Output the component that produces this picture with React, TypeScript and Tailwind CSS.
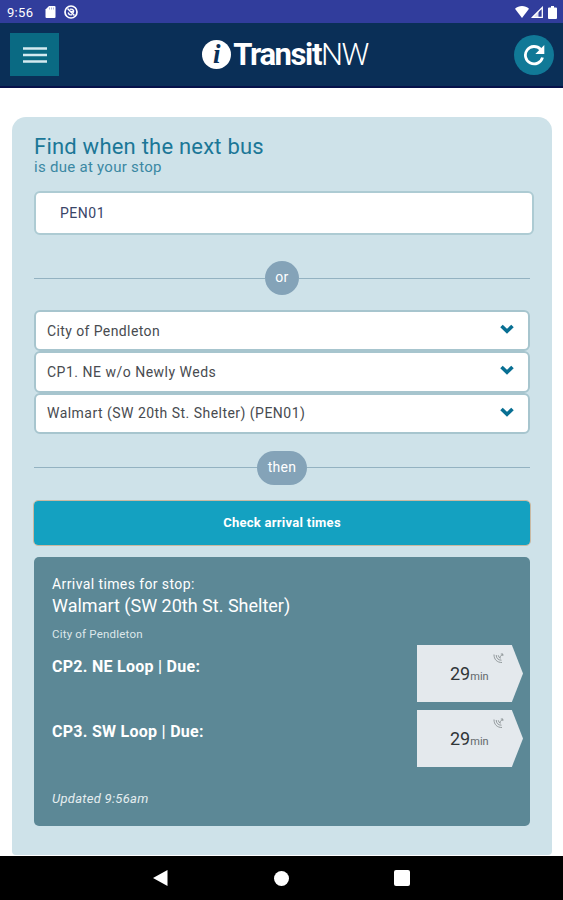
import type { ReactNode } from "react";

type Arrival = {
  route: string;
  minutes: number;
};

const selects = [
  { label: "City of Pendleton", spacing: "tracking-[0.4px]" },
  { label: "CP1. NE w/o Newly Weds", spacing: "tracking-[0.5px]" },
  { label: "Walmart (SW 20th St. Shelter) (PEN01)", spacing: "tracking-[0.47px]" },
];

const arrivals: Arrival[] = [
  { route: "CP2. NE Loop | Due:", minutes: 29 },
  { route: "CP3. SW Loop | Due:", minutes: 29 },
];

function StatusBar() {
  return (
    <div className="flex h-[23px] shrink-0 items-center bg-[#313d9c] pt-px pr-[6px] pl-[7px] text-white">
      <span className="w-[38px] text-[13px] leading-none tracking-[0.3px]">9:56</span>
      <svg className="h-[12px] w-[11px]" viewBox="0 0 10 12" fill="currentColor">
        <path d="M3.5 0H9a1 1 0 0 1 1 1v10a1 1 0 0 1-1 1H1a1 1 0 0 1-1-1V3.5z" />
        <path d="M4 1.5v2M6 1.5v2M8 1.5v2" stroke="#9aa2d4" strokeWidth="0.8" />
      </svg>
      <svg className="ml-[8px] h-[14px] w-[14px]" viewBox="0 0 14 14" fill="none" stroke="currentColor">
        <circle cx="7" cy="7" r="6" strokeWidth="1.7" />
        <path d="M3.5 3.5l7 7" strokeWidth="1.5" />
        <path d="M4.2 7.5a3 3 0 0 0 4 2.2M9.8 6.5a3 3 0 0 0-4-2.2M7 6.5l3 .8" strokeWidth="1.4" />
      </svg>
      <div className="ml-auto flex items-center">
        <svg className="h-[12px] w-[14px]" viewBox="0 0 14 11" preserveAspectRatio="none" fill="currentColor">
          <path d="M0 2.6C2 .8 4.4 0 7 0s5 .8 7 2.6L7 11z" />
        </svg>
        <svg className="ml-[2px] h-[12px] w-[12px]" viewBox="0 0 12 12" fill="none" stroke="currentColor">
          <path d="M1.5 11.3L11.3 1.5v9.800z" strokeWidth="1.3" />
          <path d="M1 11.7L7.5 5.2v6.500z" fill="currentColor" stroke="none" opacity=".8" />
        </svg>
        <svg className="ml-[5px] h-[13px] w-[9px]" viewBox="0 0 9 13" fill="currentColor">
          <path d="M3 0h3v1.5h2a1 1 0 0 1 1 1V12a1 1 0 0 1-1 1H1a1 1 0 0 1-1-1V2.5a1 1 0 0 1 1-1h2z" />
        </svg>
      </div>
    </div>
  );
}

function Header() {
  return (
    <header className="flex h-[65px] shrink-0 items-center justify-between border-b-2 border-[#06124a] bg-[#0a2f57] pr-[9px] pl-[10px]">
      <button className="flex h-[43px] w-[49px] items-center justify-center bg-[#0a6a83]">
        <svg className="h-[18px] w-[24px]" viewBox="0 0 24 18" stroke="#d3eaf0" strokeWidth="2.4">
          <path d="M0 2.5h24M0 9h24M0 15.5h24" />
        </svg>
      </button>

      <div className="mr-[3px] flex items-center text-white">
        <span className="flex h-[29px] w-[29px] items-center justify-center rounded-full bg-white pb-px font-['Liberation_Serif',serif] text-[27px] leading-none font-bold text-[#0a2f57] italic">
          i
        </span>
        <span className="ml-[2px] text-[31px] leading-none font-bold tracking-[-1.4px]">Transit</span>
        <span className="text-[31px] leading-none font-light tracking-[-1.5px]">NW</span>
      </div>

      <button className="flex h-[40px] w-[40px] items-center justify-center rounded-full bg-[#117997]">
        <svg className="h-[22px] w-[22px]" viewBox="0 0 22 22" fill="none" stroke="white">
          <path d="M19.5 13.5A8.7 8.7 0 1 1 17.5 5.3" strokeWidth="2.8" />
          <path d="M21.3 1v9h-9z" fill="white" stroke="none" />
        </svg>
      </button>
    </header>
  );
}

function Divider({ children }: { children: ReactNode }) {
  return (
    <div className="flex h-[34px] items-center text-[14px] text-white">
      <span className="h-px flex-1 bg-[#93b2c1]" />
      {children}
      <span className="h-px flex-1 bg-[#93b2c1]" />
    </div>
  );
}

function SelectRow({ label, spacing }: { label: string; spacing: string }) {
  return (
    <div className="flex h-[41.3px] items-center justify-between rounded-[6px] border-2 border-[#a7c5ce] bg-white pr-[14px] pl-[11px]">
      <span className={`pt-px text-[14px] text-[#484b50] ${spacing}`}>{label}</span>
      <svg className="mb-[3px] h-[10px] w-[14px]" viewBox="0 0 14 10" fill="none" stroke="#086f93" strokeWidth="3.6">
        <path d="M1.5 2L7 7.2 12.5 2" />
      </svg>
    </div>
  );
}

function SignalIcon() {
  return (
    <svg className="absolute top-[8px] left-[76px] h-[11px] w-[11px]" viewBox="0 0 11 11" fill="none" stroke="#92999c">
      <path d="M1 1.500c0 5 3 8 8 8M3.200 2c0 3.200 2 5.200 5.300 5.200M5.300 2.300c0 1.700 1 2.700 2.700 2.700M6 4.700L9.800 1M7.800 1h2v2" />
    </svg>
  );
}

function ArrivalRow({ route, minutes }: Arrival) {
  return (
    <div className="flex h-[57px] items-start justify-between">
      <span className="mt-[12px] text-[16px] leading-[20px] font-bold tracking-[0.27px]">{route}</span>
      <div className="relative flex h-[57px] w-[106px] items-center bg-[#e4e9ed] pl-[33px] text-[#303538] [clip-path:polygon(0_0,89.5%_0,100%_50%,89.5%_100%,0_100%)]">
        <span className="pt-px text-[18px] leading-none">
          {minutes}
          <span className="text-[11px] text-[#62686b]">min</span>
        </span>
        <SignalIcon />
      </div>
    </div>
  );
}

function NavigationBar() {
  return (
    <nav className="flex h-[44px] shrink-0 items-center bg-black pl-[153px]">
      <svg className="h-[16px] w-[15px]" viewBox="0 0 15 16" fill="white">
        <path d="M0 8L14.5 0v16z" />
      </svg>
      <span className="ml-[106px] h-[15px] w-[15px] rounded-full bg-white" />
      <span className="ml-[105px] h-[16px] w-[16px] rounded-[2px] bg-white" />
    </nav>
  );
}

export default function App() {
  return (
    <div className="flex h-[900px] w-[563px] flex-col overflow-hidden bg-white font-[Roboto,sans-serif]">
      <StatusBar />
      <Header />

      <main className="min-h-0 flex-1 pt-[29px] pr-[11px] pl-[12px]">
        <section className="h-[738px] rounded-t-[14px] rounded-b-[4px] bg-[#cee2e9] pt-[18px] pr-[22px] pl-[22px]">
          <h1 className="text-[22px] leading-[23px] tracking-[0.22px] whitespace-nowrap text-[#1b7797]">
            Find when the next bus
          </h1>
          <p className="text-[15px] leading-[18px] tracking-[0.28px] text-[#3b88a3]">is due at your stop</p>

          <div className="mt-[15px] -mr-[4px] flex h-[44px] items-center rounded-[6px] border-2 border-[#adcbd3] bg-white pl-[24px] text-[14px] tracking-[0.5px] text-[#394568]">
            PEN01
          </div>

          <div className="mt-[26px]">
            <Divider>
              <span className="flex h-[34px] w-[34px] items-center justify-center rounded-full bg-[#84a3b8] pb-px tracking-[0.4px]">
                or
              </span>
            </Divider>
          </div>

          <div className="mt-[15px]">
            {selects.map((item) => (
              <SelectRow key={item.label} {...item} />
            ))}
          </div>

          <div className="mt-[17px]">
            <Divider>
              <span className="flex h-[34px] w-[50px] items-center justify-center rounded-full bg-[#84a3b8] pb-px tracking-[0.3px]">
                then
              </span>
            </Divider>
          </div>

          <button className="mt-[16px] block h-[44px] w-full rounded-[4px] bg-[#14a1c1] text-[13px] font-bold tracking-[0.27px] text-white outline outline-[#c9b9a2]">
            Check arrival times
          </button>

          <div className="mt-[12px] h-[269px] rounded-[5px] bg-[#5c8896] pt-[18px] pr-[7px] pl-[18px] text-white">
            <p className="text-[14px] leading-[19px] tracking-[0.4px]">Arrival times for stop:</p>
            <p className="text-[18px] leading-[24px]">Walmart (SW 20th St. Shelter)</p>
            <p className="mt-[8px] pt-px text-[11.5px] leading-[15px] tracking-[0.2px] text-[#dce7ea]">City of Pendleton</p>
            <div className="mt-[3px] flex flex-col gap-[8px]">
              {arrivals.map((arrival) => (
                <ArrivalRow key={arrival.route} {...arrival} />
              ))}
            </div>
            <p className="mt-[24px] text-[13px] leading-[16px] tracking-[0.28px] text-[#e5eef0] italic">Updated 9:56am</p>
          </div>
        </section>
      </main>

      <NavigationBar />
    </div>
  );
}
